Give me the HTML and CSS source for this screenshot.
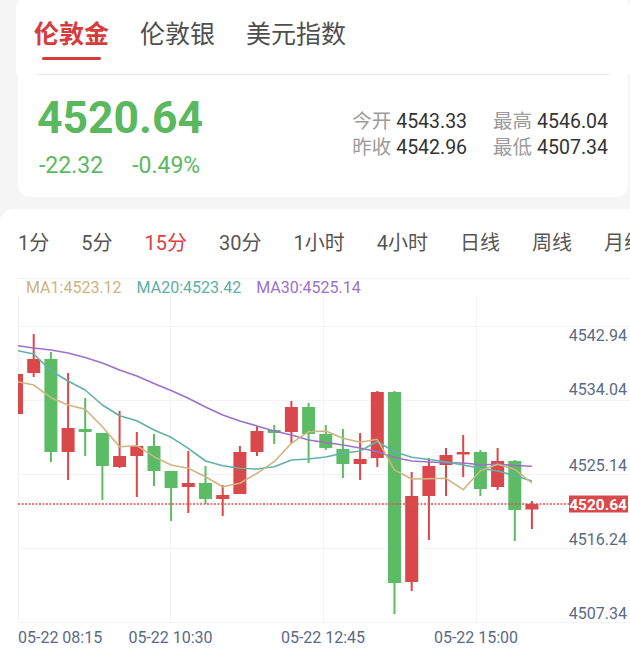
FILE: index.html
```html
<!DOCTYPE html>
<html lang="zh">
<head>
<meta charset="utf-8">
<title>伦敦金</title>
<link rel="stylesheet" href="styles.css">
</head>
<body>
<div class="top-head">
  <div class="tab active"><span>伦敦金</span><i class="tab-bar"></i></div>
  <div class="tab"><span>伦敦银</span><i class="tab-bar"></i></div>
  <div class="tab"><span>美元指数</span><i class="tab-bar"></i></div>
</div>
<div class="quote-card">
  <div class="divider"></div>
  <div class="quote-body">
    <div class="quote-main">
      <div class="price">4520.64</div>
      <div class="change"><span>-22.32</span><span>-0.49%</span></div>
    </div>
    <div class="stats">
      <div class="stat"><span class="stat-label">今开</span><span class="stat-value">4543.33</span></div>
      <div class="stat"><span class="stat-label">最高</span><span class="stat-value">4546.04</span></div>
      <div class="stat"><span class="stat-label">昨收</span><span class="stat-value">4542.96</span></div>
      <div class="stat"><span class="stat-label">最低</span><span class="stat-value">4507.34</span></div>
    </div>
  </div>
</div>
<div class="chart-card">
  <div class="periods">
    <span class="period">1分</span>
    <span class="period">5分</span>
    <span class="period active">15分</span>
    <span class="period">30分</span>
    <span class="period">1小时</span>
    <span class="period">4小时</span>
    <span class="period">日线</span>
    <span class="period">周线</span>
    <span class="period">月线</span>
  </div>
  <div class="legend">
    <span class="ma1">MA1:4523.12</span>
    <span class="ma20">MA20:4523.42</span>
    <span class="ma30">MA30:4525.14</span>
  </div>
  <svg class="chart" width="630" height="356" viewBox="0 296 630 356" xmlns="http://www.w3.org/2000/svg">
    <defs>
      <clipPath id="plot"><rect x="18" y="296" width="612" height="327"/></clipPath>
    </defs>
    <g class="grid">
      <line x1="18.5" y1="296" x2="18.5" y2="622"/>
      <line x1="170.5" y1="296" x2="170.5" y2="622"/>
      <line x1="323.5" y1="296" x2="323.5" y2="622"/>
      <line x1="476.5" y1="296" x2="476.5" y2="622"/>
      <line x1="18" y1="326.5" x2="630" y2="326.5"/>
      <line x1="18" y1="400.5" x2="630" y2="400.5"/>
      <line x1="18" y1="474.5" x2="630" y2="474.5"/>
      <line x1="18" y1="548.5" x2="630" y2="548.5"/>
      <line x1="18" y1="622.5" x2="630" y2="622.5"/>
    </g>
    <g clip-path="url(#plot)">
      <g class="up">
        <rect x="49.9" y="352" width="2" height="110"/><rect x="44.4" y="359" width="13" height="93"/>
        <rect x="84.2" y="398" width="2" height="58"/><rect x="78.7" y="429" width="13" height="3"/>
        <rect x="101.4" y="433" width="2" height="67"/><rect x="95.9" y="433" width="13" height="33"/>
        <rect x="153" y="434" width="2" height="52"/><rect x="147.5" y="446" width="13" height="25"/>
        <rect x="170.1" y="471" width="2" height="50"/><rect x="164.6" y="471" width="13" height="17"/>
        <rect x="204.5" y="466" width="2" height="38"/><rect x="199" y="483" width="13" height="16"/>
        <rect x="273.2" y="425" width="2" height="19"/><rect x="267.7" y="430" width="13" height="3"/>
        <rect x="307.6" y="403" width="2" height="60"/><rect x="302.1" y="407" width="13" height="27"/>
        <rect x="324.8" y="425" width="2" height="25"/><rect x="319.3" y="434" width="13" height="14"/>
        <rect x="341.9" y="429" width="2" height="49"/><rect x="336.4" y="449" width="13" height="15"/>
        <rect x="393.5" y="391" width="2" height="223"/><rect x="388" y="392" width="13" height="191"/>
        <rect x="479.4" y="450" width="2" height="46"/><rect x="473.9" y="452" width="13" height="37"/>
        <rect x="513.8" y="460" width="2" height="81"/><rect x="508.3" y="461" width="13" height="49"/>
      </g>
      <g class="down">
        <rect x="10" y="374" width="13" height="40"/>
        <rect x="32.7" y="334" width="2" height="43"/><rect x="27.2" y="359" width="13" height="14"/>
        <rect x="67.1" y="373" width="2" height="107"/><rect x="61.6" y="428" width="13" height="24"/>
        <rect x="118.6" y="411" width="2" height="57"/><rect x="113.1" y="456" width="13" height="11"/>
        <rect x="135.8" y="432" width="2" height="65"/><rect x="130.3" y="446" width="13" height="10"/>
        <rect x="187.3" y="451" width="2" height="62"/><rect x="181.8" y="483" width="13" height="4"/>
        <rect x="221.7" y="485" width="2" height="31"/><rect x="216.2" y="495" width="13" height="4"/>
        <rect x="238.9" y="446" width="2" height="48"/><rect x="233.4" y="452" width="13" height="42"/>
        <rect x="256" y="426" width="2" height="30"/><rect x="250.5" y="431" width="13" height="21"/>
        <rect x="290.4" y="401" width="2" height="42"/><rect x="284.9" y="407" width="13" height="25"/>
        <rect x="359.1" y="433" width="2" height="47"/><rect x="353.6" y="459" width="13" height="5"/>
        <rect x="376.3" y="391" width="2" height="76"/><rect x="370.8" y="392" width="13" height="66"/>
        <rect x="410.7" y="472" width="2" height="119"/><rect x="405.2" y="496" width="13" height="86"/>
        <rect x="427.9" y="458" width="2" height="82"/><rect x="422.4" y="466" width="13" height="30"/>
        <rect x="445" y="448" width="2" height="48"/><rect x="439.5" y="455" width="13" height="10"/>
        <rect x="462.2" y="435" width="2" height="42"/><rect x="456.7" y="452" width="13" height="2.5"/>
        <rect x="496.6" y="448" width="2" height="42"/><rect x="491.1" y="461" width="13" height="26"/>
        <rect x="530.9" y="501" width="2" height="28"/><rect x="525.4" y="504" width="13" height="5.5"/>
      </g>
      <polyline class="ma30-line" points="18,345.7 33.7,348 50.9,350 68.1,353 85.2,357.5 102.4,363 119.6,370 136.8,376 154,383.5 171.1,390.5 188.3,398.3 205.5,407 222.7,415 239.9,421 257,426 274.2,431 291.4,435 308.6,440 325.8,442.5 342.9,445 360.1,448 377.3,451.7 394.5,457.5 411.7,461 428.9,462 446,462.7 463.2,463 480.4,464.7 497.6,464.3 514.8,465.5 531.9,466.3"/>
      <polyline class="ma20-line" points="18,350.7 33.7,354 50.9,370.7 68.1,381 85.2,390 102.4,405 119.6,415.7 136.8,420.7 154,430 171.1,437.3 188.3,448.3 205.5,461 222.7,465.7 239.9,468.3 257,469 274.2,466.7 291.4,460 308.6,459 325.8,457 342.9,453.3 360.1,451 377.3,441.5 394.5,451.7 411.7,457.3 428.9,459.5 446,461.7 463.2,465 480.4,468.3 497.6,471 514.8,475.7 531.9,481"/>
      <polyline class="ma1-line" points="18,381.7 33.7,385 50.9,397.7 68.1,405 85.2,409.3 102.4,426.7 119.6,446.7 136.8,445.7 154,456.7 171.1,465 188.3,468.3 205.5,476.7 222.7,486.7 239.9,483.3 257,473.3 274.2,461.7 291.4,443.3 308.6,431.7 325.8,431 342.9,438.3 360.1,442.3 377.3,439.3 394.5,470 411.7,479 428.9,478.7 446,478.3 463.2,489.7 480.4,470.7 497.6,464.3 514.8,469.3 531.9,483"/>
    </g>
    <line class="last-line" x1="18" y1="504" x2="569" y2="504"/>
    <text class="axis" x="627" y="341" text-anchor="end">4542.94</text>
    <text class="axis" x="627" y="395" text-anchor="end">4534.04</text>
    <text class="axis" x="627" y="470.5" text-anchor="end">4525.14</text>
    <text class="axis" x="627" y="545" text-anchor="end">4516.24</text>
    <text class="axis" x="627" y="618.5" text-anchor="end">4507.34</text>
    <rect class="tag" x="569" y="495.5" width="59" height="17"/>
    <text class="tag-text" x="627" y="510" text-anchor="end">4520.64</text>
    <text class="axis" x="18" y="643">05-22 08:15</text>
    <text class="axis" x="170.5" y="643" text-anchor="middle">05-22 10:30</text>
    <text class="axis" x="323" y="643" text-anchor="middle">05-22 12:45</text>
    <text class="axis" x="476" y="643" text-anchor="middle">05-22 15:00</text>
  </svg>
</div>
</body>
</html>
```
FILE: styles.css
```css
* { box-sizing: border-box; }

html, body {
  margin: 0;
  padding: 0;
}

body {
  width: 630px;
  height: 652px;
  overflow: hidden;
  background: #f5f5f5;
  font-family: Roboto, "Noto Sans CJK SC", sans-serif;
}

/* top tabs */
.top-head {
  margin: -4px 0 0 16px;
  height: 78px;
  padding: 23px 0 0 18px;
  background: #fff;
  border-radius: 12px 12px 0 0;
  display: flex;
  gap: 31px;
}

.tab {
  display: flex;
  flex-direction: column;
  align-items: center;
  gap: 6px;
  font-size: 25px;
  line-height: 32px;
  color: #4e4e4e;
}

.tab.active {
  color: #d63c3c;
  font-weight: 700;
}

.tab-bar {
  display: block;
  width: 59px;
  height: 3px;
  border-radius: 2px;
}

.tab.active .tab-bar {
  background: #d63c3c;
}

/* quote card */
.quote-card {
  margin: 0 2px 0 18px;
  height: 123px;
  background: #fff;
  border-radius: 0 0 12px 12px;
}

.divider {
  height: 1px;
  margin: 0 18px 0 19px;
  background: #ebebeb;
}

.quote-body {
  display: flex;
  justify-content: space-between;
  align-items: flex-start;
  padding: 21px 20px 0 19px;
}

.price {
  font-size: 44.5px;
  line-height: 45px;
  font-weight: 700;
  color: #5bb85f;
}

.change {
  display: flex;
  gap: 29px;
  margin-top: 13px;
  padding-left: 2px;
  font-size: 23px;
  line-height: 23px;
  color: #5bb85f;
}

.stats {
  display: grid;
  grid-template-columns: auto auto;
  column-gap: 26px;
  margin-top: 13px;
  font-size: 19.5px;
  line-height: 26px;
}

.stat {
  display: flex;
  gap: 5px;
}

.stat-label { color: #9b9b9b; }
.stat-value { color: #333; }

/* chart card */
.chart-card {
  margin-top: 12px;
  height: 443px;
  background: #fff;
  border-top-left-radius: 14px;
  overflow: hidden;
}

.periods {
  display: flex;
  gap: 32px;
  height: 69px;
  padding: 20.5px 0 0 18px;
  font-size: 20px;
  line-height: 26px;
  color: #555;
  white-space: nowrap;
}

.period.active { color: #d9403f; }

.legend {
  display: flex;
  gap: 15px;
  height: 18px;
  margin-left: 18px;
  padding-left: 8px;
  border-top: 1px solid #efefef;
  font-size: 16px;
  line-height: 17px;
}

.ma1 { color: #cbb47e; }
.ma20 { color: #5db0a1; }
.ma30 { color: #9b72c9; }

.chart { display: block; }

.grid line {
  stroke: #f3f3f3;
  stroke-width: 1;
}

.up rect { fill: #5cbb65; }
.down rect { fill: #d9484a; }

.ma30-line, .ma20-line, .ma1-line {
  fill: none;
  stroke-width: 1.6;
  stroke-linejoin: round;
}

.ma30-line { stroke: #9b72c9; }
.ma20-line { stroke: #62b1a5; }
.ma1-line { stroke: #cdb582; }

.last-line {
  stroke: #e05050;
  stroke-width: 1.5;
  stroke-dasharray: 2 1.5;
}

.axis {
  font-family: Roboto, sans-serif;
  font-size: 16px;
  fill: #5a6a85;
}

.tag { fill: #d9484a; }

.tag-text {
  font-family: Roboto, sans-serif;
  font-size: 15.5px;
  font-weight: 700;
  fill: #fff;
}
```
